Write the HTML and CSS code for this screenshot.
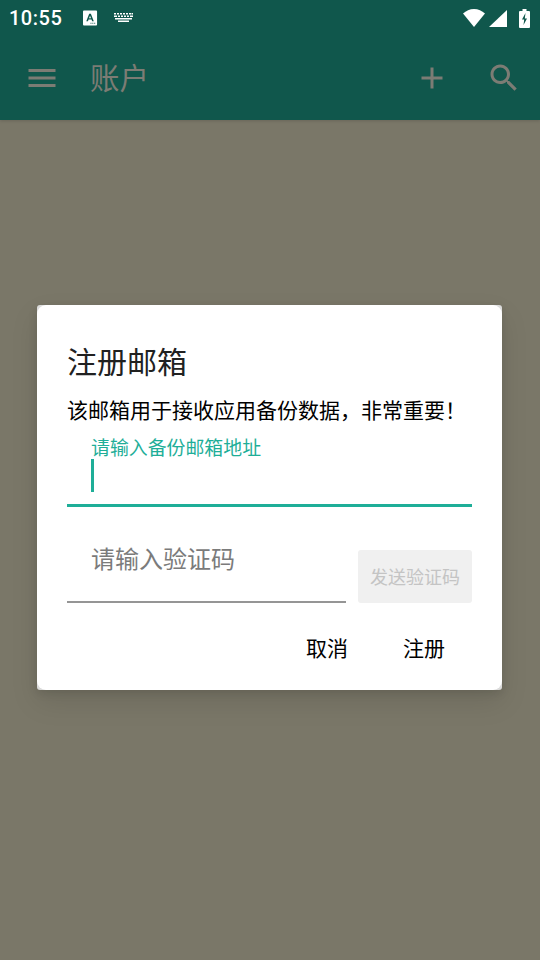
FILE: index.html
```html
<!DOCTYPE html>
<html lang="zh">
<head>
<meta charset="utf-8">
<title>账户</title>
<link rel="stylesheet" href="styles.css">
</head>
<body>
<div class="screen">
  <header class="status">
    <div class="status-left">
      <span class="time">10:55</span>
      <svg class="ic-a" viewBox="0 0 16 16"><path fill="#fff" fill-rule="evenodd" d="M1 0h13a1 1 0 0 1 1 1v14a1 1 0 0 1-1 1H1a1 1 0 0 1-1-1V1a1 1 0 0 1 1-1zM6.600 3.500 3.500 11.500H5.300L5.900 9.700H9.100L9.700 11.500H11.500L8.400 3.500zM7.500 5.600 8.600 8.300H6.400zM8 13v1h1v-1zM10 13v1h1v-1zM12 13v1h1v-1z"/></svg>
      <svg class="ic-kb" viewBox="0 0 19 10"><path fill="#fff" d="M0 0h2v1.500H0zM3 0h2v1.500H3zM6 0h2v1.500H6zM9 0h2v1.500H9zM12 0h2v1.500h-2zM15 0h2v1.500h-2zM17.500 0H19v1.500h-1.500zM0 2.500h3v1.500H0zM4 2.500h2v1.500H4zM7 2.500h2v1.500H7zM10 2.500h2v1.500h-2zM13 2.500h2v1.500h-2zM16 2.500h3v1.500h-3zM1 5h17v1.500H1zM4 7.500h11V9H4z"/></svg>
    </div>
    <div class="status-right">
      <svg class="ic-wifi" viewBox="0 0 22 18"><path fill="#fff" d="M11 18 0 4.500C3 1.800 6.800 0 11 0s8 1.800 11 4.500z"/></svg>
      <svg class="ic-signal" viewBox="0 0 18 17"><path fill="#fff" d="M18 0v17H0z"/></svg>
      <svg class="ic-batt" viewBox="0 0 11 19"><path fill="#fff" fill-rule="evenodd" d="M3.500 0h4v2H10a1 1 0 0 1 1 1v15a1 1 0 0 1-1 1H1a1 1 0 0 1-1-1V3a1 1 0 0 1 1-1h2.500zM6.500 4 3 10.500h2.200L4.500 16 8 9.500H5.800z"/></svg>
    </div>
  </header>
  <nav class="toolbar">
    <svg class="icon menu" viewBox="0 0 24 24"><path d="M3 18h18v-2H3v2zm0-5h18v-2H3v2zm0-7v2h18V6H3z"/></svg>
    <h1 class="page-title">账户</h1>
    <svg class="icon add" viewBox="0 0 24 24"><path d="M19 13h-6v6h-2v-6H5v-2h6V5h2v6h6v2z"/></svg>
    <svg class="icon search" viewBox="0 0 24 24"><path d="M15.500 14h-.79l-.28-.27C15.410 12.590 16 11.110 16 9.500 16 5.910 13.090 3 9.500 3S3 5.910 3 9.500 5.910 16 9.500 16c1.610 0 3.090-.59 4.230-1.570l.27.28v.79l5 4.990L20.490 19l-4.990-5zm-6 0C7.010 14 5 11.990 5 9.500S7.010 5 9.500 5 14 7.010 14 9.500 11.990 14 9.500 14z"/></svg>
  </nav>
  <main class="content"></main>
  <div class="overlay">
    <section class="dialog">
      <div class="dialog-body">
        <h2 class="dialog-title">注册邮箱</h2>
        <p class="dialog-text">该邮箱用于接收应用备份数据，非常重要！</p>
        <div class="field focused">
          <label class="float-label">请输入备份邮箱地址</label>
          <span class="caret"></span>
        </div>
        <div class="code-row">
          <div class="field code-field"><span class="placeholder">请输入验证码</span></div>
          <button class="send-btn" type="button">发送验证码</button>
        </div>
        <div class="actions">
          <button class="action" type="button">取消</button>
          <button class="action" type="button">注册</button>
        </div>
      </div>
    </section>
  </div>
</div>
</body>
</html>
```

FILE: styles.css
```css
* { box-sizing: border-box; }
html, body { margin: 0; padding: 0; }
body {
  width: 540px;
  height: 960px;
  overflow: hidden;
  font-family: "Noto Sans CJK SC", "Noto Sans", sans-serif;
}
.screen {
  position: relative;
  width: 540px;
  height: 960px;
  display: flex;
  flex-direction: column;
  background: #7a7768;
}
.status {
  position: relative;
  z-index: 2;
  height: 36px;
  flex: none;
  background: #10574c;
  display: flex;
  justify-content: space-between;
  align-items: center;
  padding: 0 10px 0 9px;
}
.status-left { display: flex; align-items: center; }
.time {
  font-family: Roboto, sans-serif;
  font-size: 20px;
  font-weight: 500;
  color: #fff;
  letter-spacing: 0.5px;
  width: 74px;
}
.ic-a { width: 15px; height: 16px; margin-right: 16px; }
.ic-kb { width: 19px; height: 10px; margin-bottom: 1px; }
.status-right { display: flex; align-items: center; }
.ic-wifi { width: 22px; height: 18px; margin-right: 4px; }
.ic-signal { width: 18px; height: 17px; margin-right: 12px; }
.ic-batt { width: 11px; height: 19px; }
.toolbar {
  position: relative;
  z-index: 1;
  height: 84px;
  flex: none;
  background: #10574c;
  display: flex;
  align-items: center;
  padding: 0 18px 0 24px;
  box-shadow: 0 1px 3px rgba(0, 0, 0, 0.15);
}
.icon { width: 36px; height: 36px; fill: #7c7c74; flex: none; }
.page-title {
  margin: -4px 0 0 30px;
  font-size: 29.500px;
  font-weight: 400;
  color: #7c7c74;
  flex: 1;
}
.add { margin-right: 36px; }
.content { flex: 1; }
.overlay {
  position: absolute;
  inset: 36px 38px 1px 37px;
  display: flex;
  align-items: center;
  z-index: 3;
}
.dialog {
  width: 100%;
  background: #dcdcdc;
  border-radius: 3px;
  box-shadow: 0 3px 10px rgba(0, 0, 0, 0.1), 0 12px 28px rgba(0, 0, 0, 0.1);
}
.dialog-body {
  height: 385px;
  background: #fff;
  border-radius: 9px;
  padding: 34px 30px 0 30px;
  display: flex;
  flex-direction: column;
}
.dialog-title {
  margin: 0;
  font-size: 30px;
  line-height: 42px;
  font-weight: 400;
  color: #212121;
}
.dialog-text {
  margin: 13px 0 0 0;
  font-size: 21px;
  line-height: 30px;
  color: #000;
  white-space: nowrap;
}
.field { position: relative; }
.focused {
  margin-top: 11px;
  height: 72px;
  border-bottom: 3px solid #1eae98;
  padding-left: 24px;
}
.float-label {
  display: block;
  font-size: 18.900px;
  line-height: 24px;
  color: #1eae98;
}
.caret {
  display: block;
  width: 3px;
  height: 33px;
  background: #1eae98;
}
.code-row {
  margin-top: 43px;
  display: flex;
  justify-content: space-between;
  align-items: flex-end;
}
.code-field {
  width: 279px;
  height: 53px;
  border-bottom: 2px solid #959595;
  padding-left: 24px;
}
.placeholder {
  font-size: 24px;
  line-height: 34px;
  color: #7b7b7b;
  display: block;
  margin-top: -9px;
}
.send-btn {
  width: 114px;
  height: 53px;
  border: 0;
  border-radius: 3px;
  background: #f0f0f0;
  color: #c4c4c4;
  font: 400 18px/53px "Noto Sans CJK SC", sans-serif;
  padding: 0;
}
.actions {
  margin-top: 24px;
  display: flex;
  justify-content: flex-end;
  gap: 55px;
  padding-right: 27px;
}
.action {
  border: 0;
  background: none;
  padding: 0;
  color: #000;
  font: 400 21px/40px "Noto Sans CJK SC", sans-serif;
}
```
